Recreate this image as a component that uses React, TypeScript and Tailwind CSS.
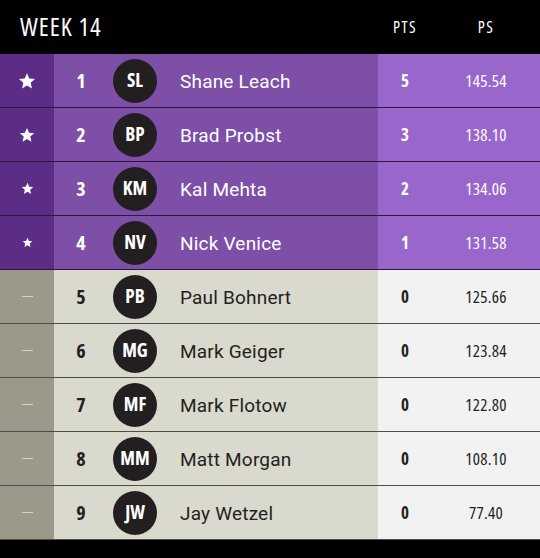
const rows = [
  { rank: 1, initials: "SL", name: "Shane Leach", pts: 5, ps: "145.54", star: 18 },
  { rank: 2, initials: "BP", name: "Brad Probst", pts: 3, ps: "138.10", star: 16 },
  { rank: 3, initials: "KM", name: "Kal Mehta", pts: 2, ps: "134.06", star: 13 },
  { rank: 4, initials: "NV", name: "Nick Venice", pts: 1, ps: "131.58", star: 11 },
  { rank: 5, initials: "PB", name: "Paul Bohnert", pts: 0, ps: "125.66", star: 0 },
  { rank: 6, initials: "MG", name: "Mark Geiger", pts: 0, ps: "123.84", star: 0 },
  { rank: 7, initials: "MF", name: "Mark Flotow", pts: 0, ps: "122.80", star: 0 },
  { rank: 8, initials: "MM", name: "Matt Morgan", pts: 0, ps: "108.10", star: 0 },
  { rank: 9, initials: "JW", name: "Jay Wetzel", pts: 0, ps: "77.40", star: 0 },
];

function Star({ size }: { size: number }) {
  return (
    <svg width={size} height={size} viewBox="0 0 24 24" fill="white">
      <path d="M12 1.5l3.1 7.1 7.6.7-5.8 5.1 1.7 7.6L12 18l-6.6 4 1.7-7.6L1.3 9.3l7.6-.7z" />
    </svg>
  );
}

export default function App() {
  return (
    <main
      className="h-[558px] w-[540px] bg-black [font-stretch:75%]"
      style={{ fontFamily: "'Open Sans', Roboto, sans-serif" }}
    >
      <div className="grid h-[54px] grid-cols-[378px_54px_108px] items-center text-white">
        <p className="pl-5 text-[25px] font-medium tracking-[1px]">WEEK 14</p>
        <p className="text-center text-[16px] font-medium tracking-[1.5px]">PTS</p>
        <p className="text-center text-[16px] font-medium tracking-[1.5px]">PS</p>
      </div>

      {rows.map((row) => {
        const top = row.star > 0;
        return (
          <div
            key={row.rank}
            className={`grid h-[54px] grid-cols-[54px_54px_54px_216px_54px_108px] items-center border-b ${
              top ? "border-[#2b1740]" : "border-[#4d4d4a]"
            }`}
          >
            <div
              className={`flex h-full items-center justify-center ${
                top ? "bg-[#5b2d86]" : "bg-[#9b998a]"
              }`}
            >
              {top ? <Star size={row.star} /> : <span className="h-[1.5px] w-[11px] bg-[#d4d3c8]" />}
            </div>
            <div
              className={`flex h-full items-center justify-center text-[20px] font-bold ${
                top ? "bg-[#7d4fa6] text-white" : "bg-[#d9d9cd] text-[#231f20]"
              }`}
            >
              {row.rank}
            </div>
            <div className={`flex h-full items-center justify-center ${top ? "bg-[#7d4fa6]" : "bg-[#d9d9cd]"}`}>
              <span className="flex h-[44px] w-[44px] items-center justify-center rounded-full bg-[#231f20] text-[19px] font-bold text-white">
                {row.initials}
              </span>
            </div>
            <div
              className={`flex h-full items-center pl-[18px] pt-[3px] text-[19px] tracking-[0.2px] [font-family:Roboto,sans-serif] [font-stretch:100%] ${
                top ? "bg-[#7d4fa6] text-white" : "bg-[#d9d9cd] text-[#231f20]"
              }`}
            >
              {row.name}
            </div>
            <div
              className={`flex h-full items-center justify-center text-[17px] font-bold ${
                top ? "bg-[#9966cc] text-white" : "bg-[#f2f2f2] text-[#231f20]"
              }`}
            >
              {row.pts}
            </div>
            <div
              className={`flex h-full items-center justify-center text-[17px] tracking-[0.3px] ${
                top ? "bg-[#9966cc] text-white" : "bg-[#f2f2f2] text-[#231f20]"
              }`}
            >
              {row.ps}
            </div>
          </div>
        );
      })}
    </main>
  );
}
